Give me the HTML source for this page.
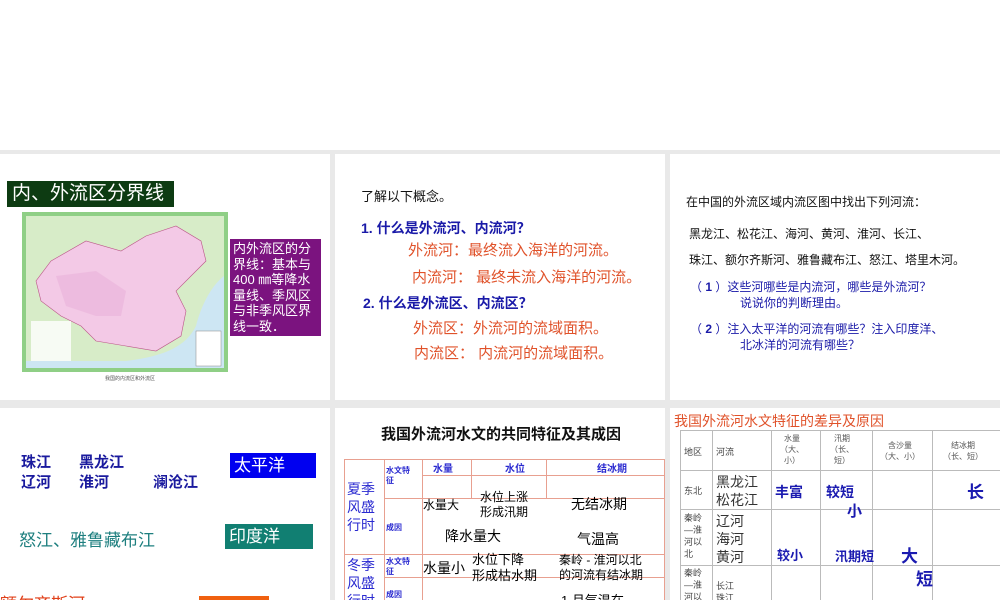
<!DOCTYPE html>
<html><head><meta charset="utf-8"><style>
*{margin:0;padding:0;box-sizing:border-box}
body{width:1000px;height:600px;overflow:hidden;background:#fff;position:relative;font-family:"Liberation Sans","Noto Sans CJK SC",sans-serif}
.g{position:absolute;left:0;top:150px;width:1000px;height:450px;background:#e9e9e9}
.p{position:absolute;background:#fff;overflow:hidden}
.a{position:absolute;white-space:nowrap}
table{border-collapse:collapse;position:absolute}
</style></head><body>
<div class="g"></div>
<!-- panel 1 -->
<div class="p" style="left:0;top:154px;width:330px;height:246px">
 <div class="a" style="left:7px;top:27px;width:167px;height:26px;background:#0d3b12;color:#fff;font-size:19px;line-height:26px;padding-left:5px">内、外流区分界线</div>
 <div class="a" style="left:22px;top:58px;width:206px;height:160px;background:#8fcf86;padding:4px">
  <svg width="198" height="152" viewBox="0 0 198 152">
   <rect width="198" height="152" fill="#cde6f3"/>
   <path d="M0 0H198V60C185 70 175 90 170 110 160 130 140 140 100 145H0Z" fill="#d7ecc8"/>
   <path d="M25 45 60 25 95 35 120 20 150 10 175 25 180 45 165 60 150 75 160 95 155 120 130 135 100 130 70 125 55 110 35 100 15 85 10 65Z" fill="#f3c9e6" stroke="#b58" stroke-width=".6"/>
   <path d="M30 60 70 55 100 75 95 100 70 100 40 90Z" fill="#e9b3da" opacity=".6"/>
   <rect x="5" y="105" width="40" height="40" fill="#fff" opacity=".8"/>
   <rect x="170" y="115" width="25" height="35" fill="#fff" stroke="#888" stroke-width=".5"/>
  </svg>
 </div>
 <div class="a" style="left:105px;top:221px;font-size:5px;color:#555">我国的内流区和外流区</div>
 <div class="a" style="left:230px;top:85px;width:91px;height:97px;background:#7b137f;color:#fff;font-size:13px;line-height:15.6px;padding:2px 3px">内外流区的分<br>界线：基本与<br>400 ㎜等降水<br>量线、季风区<br>与非季风区界<br>线一致．</div>
</div>
<!-- panel 2 -->
<div class="p" style="left:335px;top:154px;width:330px;height:246px;font-weight:bold">
 <div class="a" style="left:26px;top:32px;font-size:13px;font-weight:normal;color:#111">了解以下概念。</div>
 <div class="a" style="left:26px;top:64px;font-size:14px;color:#1a1aa8">1. 什么是外流河、内流河？</div>
 <div class="a" style="left:73px;top:85px;font-size:15px;color:#e0522a;font-weight:normal">外流河：最终流入海洋的河流。</div>
 <div class="a" style="left:77px;top:112px;font-size:15px;color:#e0522a;font-weight:normal">内流河： 最终未流入海洋的河流。</div>
 <div class="a" style="left:28px;top:139px;font-size:14px;color:#1a1aa8">2. 什么是外流区、内流区？</div>
 <div class="a" style="left:78px;top:163px;font-size:15px;color:#e0522a;font-weight:normal">外流区：外流河的流域面积。</div>
 <div class="a" style="left:79px;top:188px;font-size:15px;color:#e0522a;font-weight:normal">内流区： 内流河的流域面积。</div>
</div>
<!-- panel 3 -->
<div class="p" style="left:670px;top:154px;width:330px;height:246px;font-size:12px;color:#111">
 <div class="a" style="left:16px;top:39px">在中国的外流区域内流区图中找出下列河流：</div>
 <div class="a" style="left:19px;top:71px">黑龙江、松花江、海河、黄河、淮河、长江、</div>
 <div class="a" style="left:19px;top:97px">珠江、额尔齐斯河、雅鲁藏布江、怒江、塔里木河。</div>
 <div class="a" style="left:20px;top:124px;color:#1a1aa8">（ <b>1</b> ）这些河哪些是内流河，哪些是外流河？</div>
 <div class="a" style="left:70px;top:140px;color:#1a1aa8">说说你的判断理由。</div>
 <div class="a" style="left:20px;top:166px;color:#1a1aa8">（ <b>2</b> ）注入太平洋的河流有哪些？注入印度洋、</div>
 <div class="a" style="left:70px;top:182px;color:#1a1aa8">北冰洋的河流有哪些？</div>
</div>
<!-- panel 4 -->
<div class="p" style="left:0;top:408px;width:330px;height:192px;font-size:15px;font-weight:bold">
 <div class="a" style="left:21px;top:43px;color:#1a1a9e">珠江</div>
 <div class="a" style="left:79px;top:43px;color:#1a1a9e">黑龙江</div>
 <div class="a" style="left:21px;top:63px;color:#1a1a9e">辽河</div>
 <div class="a" style="left:79px;top:63px;color:#1a1a9e">淮河</div>
 <div class="a" style="left:153px;top:63px;color:#1a1a9e">澜沧江</div>
 <div class="a" style="left:230px;top:45px;width:86px;height:25px;background:#0000f0;color:#fff;font-size:17px;font-weight:normal;line-height:25px;padding-left:4px">太平洋</div>
 <div class="a" style="left:19px;top:118px;color:#1e7f7f;font-size:17px;font-weight:normal">怒江、雅鲁藏布江</div>
 <div class="a" style="left:225px;top:116px;width:88px;height:25px;background:#117f72;color:#fff;font-size:17px;font-weight:normal;line-height:25px;padding-left:4px">印度洋</div>
 <div class="a" style="left:0;top:182px;color:#e0401a;font-size:17px;font-weight:normal">额尔齐斯河</div>
 <div class="a" style="left:199px;top:188px;width:70px;height:10px;background:#f06010"></div>
</div>
<!-- panel 5 -->
<div class="p" style="left:335px;top:408px;width:330px;height:192px">
 <div class="a" style="left:46px;top:15px;font-size:15px;font-weight:bold;color:#111">我国外流河水文的共同特征及其成因</div>
 <svg class="a" style="left:0;top:0" width="330" height="192">
  <g stroke="#e8a090" stroke-width="1" fill="none">
   <rect x="9.5" y="51.5" width="320" height="150"/>
   <line x1="49.5" y1="51" x2="49.5" y2="192"/>
   <line x1="87.5" y1="51" x2="87.5" y2="192"/>
   <line x1="88" y1="67.5" x2="330" y2="67.5"/>
   <line x1="136.5" y1="51" x2="136.5" y2="90"/>
   <line x1="211.5" y1="51" x2="211.5" y2="90"/>
   <line x1="50" y1="90.5" x2="330" y2="90.5"/>
   <line x1="9" y1="146.5" x2="330" y2="146.5"/>
   <line x1="50" y1="169.5" x2="330" y2="169.5"/>
  </g>
 </svg>
 <div class="a" style="left:51px;top:58px;font-size:8px;line-height:10px;color:#2a2ad0;font-weight:bold">水文特<br>征</div>
 <div class="a" style="left:51px;top:114px;font-size:8px;color:#2a2ad0;font-weight:bold">成因</div>
 <div class="a" style="left:51px;top:149px;font-size:8px;line-height:10px;color:#2a2ad0;font-weight:bold">水文特<br>征</div>
 <div class="a" style="left:51px;top:181px;font-size:8px;color:#2a2ad0;font-weight:bold">成因</div>
 <div class="a" style="left:98px;top:52px;font-size:10px;color:#2a2ad0;font-weight:bold">水量</div>
 <div class="a" style="left:170px;top:52px;font-size:10px;color:#2a2ad0;font-weight:bold">水位</div>
 <div class="a" style="left:262px;top:52px;font-size:10px;color:#2a2ad0;font-weight:bold">结冰期</div>
 <div class="a" style="left:12px;top:72px;font-size:14px;line-height:18px;color:#2a2ad0">夏季<br>风盛<br>行时</div>
 <div class="a" style="left:12px;top:148px;font-size:14px;line-height:18px;color:#2a2ad0">冬季<br>风盛<br>行时</div>
 <div class="a" style="left:88px;top:88px;font-size:12px">水量大</div>
 <div class="a" style="left:145px;top:82px;font-size:12px;line-height:15px">水位上涨<br>形成汛期</div>
 <div class="a" style="left:236px;top:86px;font-size:14px">无结冰期</div>
 <div class="a" style="left:110px;top:118px;font-size:14px">降水量大</div>
 <div class="a" style="left:242px;top:121px;font-size:14px">气温高</div>
 <div class="a" style="left:88px;top:150px;font-size:14px">水量小</div>
 <div class="a" style="left:137px;top:144px;font-size:13px;line-height:16px">水位下降<br>形成枯水期</div>
 <div class="a" style="left:224px;top:145px;font-size:12px;line-height:15px">秦岭 - 淮河以北<br>的河流有结冰期</div>
 <div class="a" style="left:226px;top:182px;font-size:13px">1 月气温在</div>
</div>
<!-- panel 6 -->
<div class="p" style="left:670px;top:408px;width:330px;height:192px">
 <div class="a" style="left:4px;top:3px;font-size:14px;color:#e0522a">我国外流河水文特征的差异及原因</div>
 <svg class="a" style="left:0;top:0" width="330" height="192">
  <g stroke="#bbb" stroke-width="1" fill="none">
   <rect x="10.5" y="22.5" width="320" height="180"/>
   <line x1="42.5" y1="22" x2="42.5" y2="192"/>
   <line x1="101.5" y1="22" x2="101.5" y2="192"/>
   <line x1="150.5" y1="22" x2="150.5" y2="192"/>
   <line x1="202.5" y1="22" x2="202.5" y2="192"/>
   <line x1="262.5" y1="22" x2="262.5" y2="192"/>
   <line x1="10" y1="62.5" x2="330" y2="62.5"/>
   <line x1="10" y1="101.5" x2="330" y2="101.5"/>
   <line x1="10" y1="157.5" x2="330" y2="157.5"/>
  </g>
 </svg>
 <div class="a" style="left:14px;top:37px;font-size:9px;color:#444">地区</div>
 <div class="a" style="left:46px;top:37px;font-size:9px;color:#444">河流</div>
 <div class="a" style="left:110px;top:25px;font-size:8px;line-height:11px;color:#555;text-align:center">水量<br>（大、<br>小）</div>
 <div class="a" style="left:160px;top:25px;font-size:8px;line-height:11px;color:#555;text-align:center">汛期<br>（长、<br>短）</div>
 <div class="a" style="left:210px;top:32px;font-size:8px;line-height:11px;color:#555;text-align:center">含沙量<br>（大、小）</div>
 <div class="a" style="left:273px;top:32px;font-size:8px;line-height:11px;color:#555;text-align:center">结冰期<br>（长、短）</div>
 <div class="a" style="left:14px;top:76px;font-size:9px;color:#444">东北</div>
 <div class="a" style="left:46px;top:65px;font-size:14px;line-height:18px;color:#333">黑龙江<br>松花江</div>
 <div class="a" style="left:105px;top:74px;font-size:14px;font-weight:bold;color:#1a1ab0">丰富</div>
 <div class="a" style="left:156px;top:74px;font-size:14px;font-weight:bold;color:#1a1ab0">较短</div>
 <div class="a" style="left:177px;top:92px;font-size:15px;font-weight:bold;color:#1a1ab0">小</div>
 <div class="a" style="left:297px;top:70px;font-size:17px;font-weight:bold;color:#1a1ab0">长</div>
 <div class="a" style="left:14px;top:104px;font-size:9px;line-height:12px;color:#444">秦岭<br>—淮<br>河以<br>北</div>
 <div class="a" style="left:46px;top:104px;font-size:14px;line-height:18px;color:#333">辽河<br>海河<br>黄河</div>
 <div class="a" style="left:107px;top:137px;font-size:13px;font-weight:bold;color:#1a1ab0">较小</div>
 <div class="a" style="left:165px;top:138px;font-size:13px;font-weight:bold;color:#1a1ab0">汛期短</div>
 <div class="a" style="left:231px;top:134px;font-size:17px;font-weight:bold;color:#1a1ab0">大</div>
 <div class="a" style="left:246px;top:157px;font-size:17px;font-weight:bold;color:#1a1ab0">短</div>
 <div class="a" style="left:14px;top:159px;font-size:9px;line-height:12px;color:#444">秦岭<br>—淮<br>河以</div>
 <div class="a" style="left:46px;top:172px;font-size:9px;line-height:12px;color:#444">长江<br>珠江</div>
</div>
</body></html>
